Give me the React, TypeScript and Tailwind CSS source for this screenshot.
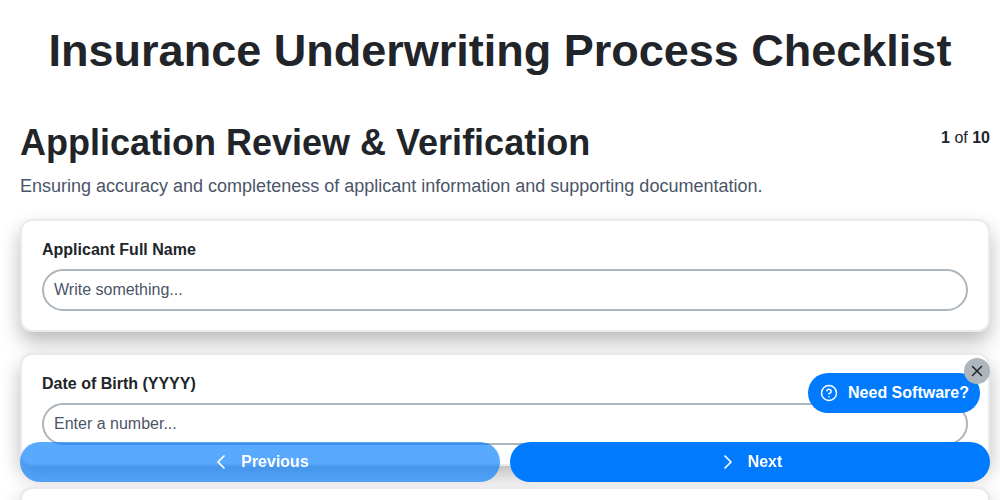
import { ChevronLeft, ChevronRight, CircleHelp, X } from 'lucide-react'

const fields = [
  { label: 'Applicant Full Name', placeholder: 'Write something...' },
  { label: 'Date of Birth (YYYY)', placeholder: 'Enter a number...' },
]

export default function App() {
  return (
    <div className="h-[500px] overflow-hidden bg-white font-['Liberation_Sans',Arial,sans-serif] text-[#212529]">
      <h1 className="pt-[21px] text-center text-[45px] font-bold leading-[60px]">
        Insurance Underwriting Process Checklist
      </h1>

      <main className="pl-[20px] pr-[10px] pt-[38px]">
        <div className="flex items-start justify-between">
          <h2 className="text-[36px] font-bold leading-[48px]">Application Review &amp; Verification</h2>
          <div className="pt-[9px] text-[16px] leading-[20px]">
            <b>1</b> of <b>10</b>
          </div>
        </div>
        <p className="mt-[7px] text-[18px] leading-[24px] text-[#4a5568]">
          Ensuring accuracy and completeness of applicant information and supporting documentation.
        </p>

        <div className="mt-[21px] flex flex-col gap-[21px]">
          {fields.map((f) => (
            <div
              key={f.label}
              className="h-[113px] rounded-[12px] border-2 border-[#e9e9ee] bg-white px-[20px] pt-[19px] shadow-[0_10px_20px_rgba(0,0,0,0.27)]"
            >
              <label className="block text-[16px] font-bold leading-[20px]">{f.label}</label>
              <input
                readOnly
                placeholder={f.placeholder}
                className="mt-[9px] h-[42px] w-full rounded-full border-2 border-[#adb5bd] bg-white px-[10px] text-[16px] placeholder:text-[#4a5568]"
              />
            </div>
          ))}
          <div className="h-[113px] rounded-[12px] border-2 border-[#e9e9ee] bg-white shadow-[0_10px_20px_rgba(0,0,0,0.27)]" />
        </div>
      </main>

      <div className="fixed bottom-[18px] left-[20px] right-[10px] flex gap-[10px]">
        <button className="flex h-[40px] w-[480px] items-center justify-center gap-[8px] rounded-[20px] bg-[#007bff]/65 pr-[2px] text-[16px] font-bold text-white">
          <ChevronLeft size={24} strokeWidth={1.75} />
          Previous
        </button>
        <button className="flex h-[40px] w-[480px] items-center justify-center gap-[8px] rounded-[20px] bg-[#007bff] pr-[2px] text-[16px] font-bold text-white">
          <ChevronRight size={24} strokeWidth={1.75} />
          Next
        </button>
      </div>

      <button className="fixed left-[808px] top-[373px] flex h-[40px] w-[172px] items-center justify-center gap-[10px] rounded-[20px] bg-[#007bff] pl-[1px] text-[16px] font-bold text-white">
        <CircleHelp size={18} strokeWidth={2} />
        Need Software?
      </button>
      <button className="fixed left-[964px] top-[358px] flex h-[26px] w-[26px] items-center justify-center rounded-full bg-[#adb5bd] text-[#212529]">
        <X size={18} strokeWidth={2} />
      </button>
    </div>
  )
}
